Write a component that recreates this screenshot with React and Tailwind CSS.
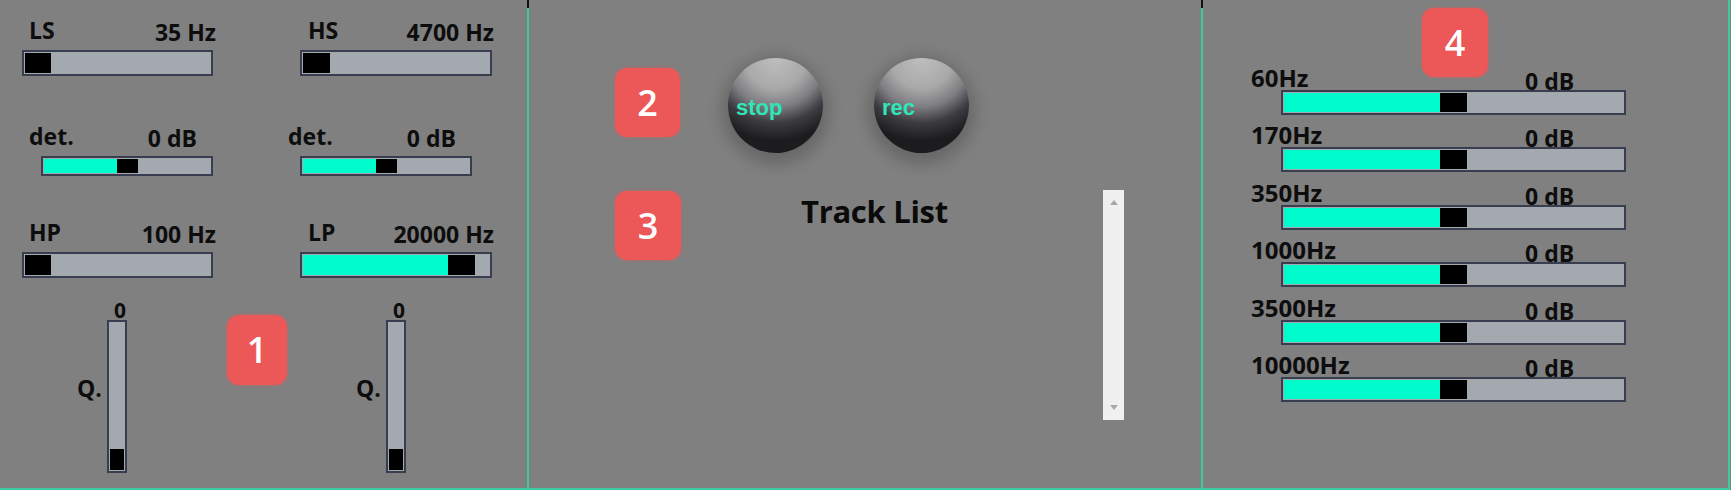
import React from 'react';

const font = "font-['Open_Sans',sans-serif]";

const Slider = ({ className = '', fill = 0, thumb, vertical = false }) => (
  <div
    className={`flex shrink-0 border-2 border-[#383d4f] bg-[#a3a9ae] p-px ${
      vertical ? 'flex-col justify-end' : 'flex-row'
    } ${className}`}
  >
    {fill > 0 && (
      <div
        className={vertical ? 'w-full bg-[#00fccc]' : 'h-full bg-[#00fccc]'}
        style={vertical ? { height: fill } : { width: fill }}
      />
    )}
    <div
      className={vertical ? 'w-full bg-black' : 'h-full bg-black'}
      style={vertical ? { height: thumb } : { width: thumb }}
    />
  </div>
);

const Badge = ({ n, className }) => (
  <div
    className={`absolute flex items-center justify-center rounded-[12px] bg-[#ec5757] text-[36px] font-semibold leading-none text-white shadow-[0_0_3px_rgba(236,87,87,0.7)] ${font} ${className}`}
  >
    {n}
  </div>
);

const Tick = () => <div className="absolute right-[-2px] top-0 h-[8px] w-[2px] bg-[#111]" />;

const LabelRow = ({ left, right, className = '' }) => (
  <div className={`flex h-[23px] items-start justify-between text-[23px] font-bold leading-[23px] text-[#0d0d0d] ${className}`}>
    <span>{left}</span>
    <span className="mt-[2px]">{right}</span>
  </div>
);

const QFader = ({ offset }) => (
  <div className={`mt-[22px] flex ${offset}`}>
    <span className="mt-[77px] w-[30px] text-[23px] font-bold leading-[23px] text-[#0d0d0d]">Q.</span>
    <div className="flex w-[20px] flex-col">
      <div className="h-[20px] pr-px text-right text-[21px] font-bold leading-[20px] text-[#0d0d0d]">0</div>
      <Slider vertical className="h-[153px] w-[20px]" thumb={21} />
    </div>
  </div>
);

const FilterPanel = () => (
  <section className={`relative flex h-full w-[529px] shrink-0 border-b-2 border-r-2 border-[#3fc9a3] ${font}`}>
    <Tick />
    <div className="ml-[22px] flex w-[192px] flex-col pt-[19px]">
      <LabelRow left="LS" right="35 Hz" className="-mr-[2px] pl-[7px]" />
      <Slider className="mt-[8px] h-[26px] w-[191px]" thumb={26} />

      <LabelRow left="det." right="0 dB" className="mt-[49px] pl-[7px] pr-[17px]" />
      <Slider className="ml-[19px] mt-[8px] h-[20px] w-[172px]" fill={73} thumb={21} />

      <LabelRow left="HP" right="100 Hz" className="-mr-[2px] mt-[45px] pl-[7px]" />
      <Slider className="mt-[8px] h-[26px] w-[191px]" thumb={26} />

      <QFader offset="ml-[55px]" />
    </div>

    <div className="ml-[74px] flex w-[206px] flex-col pt-[19px]">
      <LabelRow left="HS" right="4700 Hz" className="pl-[20px]" />
      <Slider className="ml-[12px] mt-[8px] h-[26px] w-[192px]" thumb={27} />

      <LabelRow left="det." right="0 dB" className="mt-[49px] pr-[38px]" />
      <Slider className="ml-[12px] mt-[8px] h-[20px] w-[172px]" fill={73} thumb={21} />

      <LabelRow left="LP" right="20000 Hz" className="mt-[45px] pl-[20px]" />
      <Slider className="ml-[12px] mt-[8px] h-[26px] w-[192px]" fill={145} thumb={27} />

      <QFader offset="ml-[68px]" />
    </div>

    <Badge n="1" className="left-[227px] top-[315px] h-[70px] w-[60px]" />
  </section>
);

const RoundButton = ({ label }) => (
  <button
    type="button"
    className="flex h-[95px] w-[95px] items-center justify-start rounded-full bg-[radial-gradient(ellipse_95%_95%_at_50%_0%,#bebebe_0%,#a9a9a9_34%,#7e7e82_54%,#3c3c40_72%,#1c1c1f_92%)] pl-[8px] shadow-[0_5px_16px_6px_rgba(0,0,0,0.2)]"
  >
    <span className="mt-[4px] font-['Liberation_Sans',Arial,sans-serif] text-[22px] font-bold leading-[22px] text-[#2fe6b6]">
      {label}
    </span>
  </button>
);

const TransportPanel = () => (
  <section className={`relative flex h-full w-[674px] shrink-0 flex-col border-b-2 border-r-2 border-[#3fc9a3] ${font}`}>
    <Tick />
    <div className="flex gap-[51px] pl-[199px] pt-[58px]">
      <RoundButton label="stop" />
      <RoundButton label="rec" />
    </div>

    <div className="mt-[37px] flex">
      <h2 className="ml-[272px] mt-[5px] text-[31px] font-bold leading-[32px] tracking-[-0.3px] text-[#0a0a0a]">Track List</h2>
      <div className="ml-auto mr-[77px] flex h-[230px] w-[21px] flex-col items-center justify-between bg-[#f0f0f0] py-[10px]">
        <div className="h-0 w-0 border-x-[4px] border-b-[5px] border-x-transparent border-b-[#a8a8a8]" />
        <div className="h-0 w-0 border-x-[4px] border-t-[5px] border-x-transparent border-t-[#a8a8a8]" />
      </div>
    </div>

    <Badge n="2" className="left-[86px] top-[68px] h-[69px] w-[65px]" />
    <Badge n="3" className="left-[86px] top-[191px] h-[69px] w-[66px]" />
  </section>
);

const bands = ['60Hz', '170Hz', '350Hz', '1000Hz', '3500Hz', '10000Hz'];

const EqPanel = () => (
  <section className={`relative flex h-full w-[527px] shrink-0 flex-col border-b-2 border-r-2 border-[#3fc9a3] pt-[57px] ${font}`}>
    {bands.map((band) => (
      <div key={band} className="flex flex-col">
        <div className="flex h-[32.5px] items-end pl-[48px] font-bold text-[#0d0d0d]">
          <span className="w-[274px] text-[24px] leading-[24px]">{band}</span>
          <span className="mb-[-3px] text-[23px] leading-[23px]">0 dB</span>
        </div>
        <Slider className="ml-[78px] h-[25px] w-[345px]" fill={156} thumb={27} />
      </div>
    ))}
    <Badge n="4" className="left-[219px] top-[8px] h-[69px] w-[66px]" />
  </section>
);

export default function App() {
  return (
    <div className="flex h-[490px] w-[1731px] overflow-hidden bg-[#808080]">
      <FilterPanel />
      <TransportPanel />
      <EqPanel />
    </div>
  );
}
